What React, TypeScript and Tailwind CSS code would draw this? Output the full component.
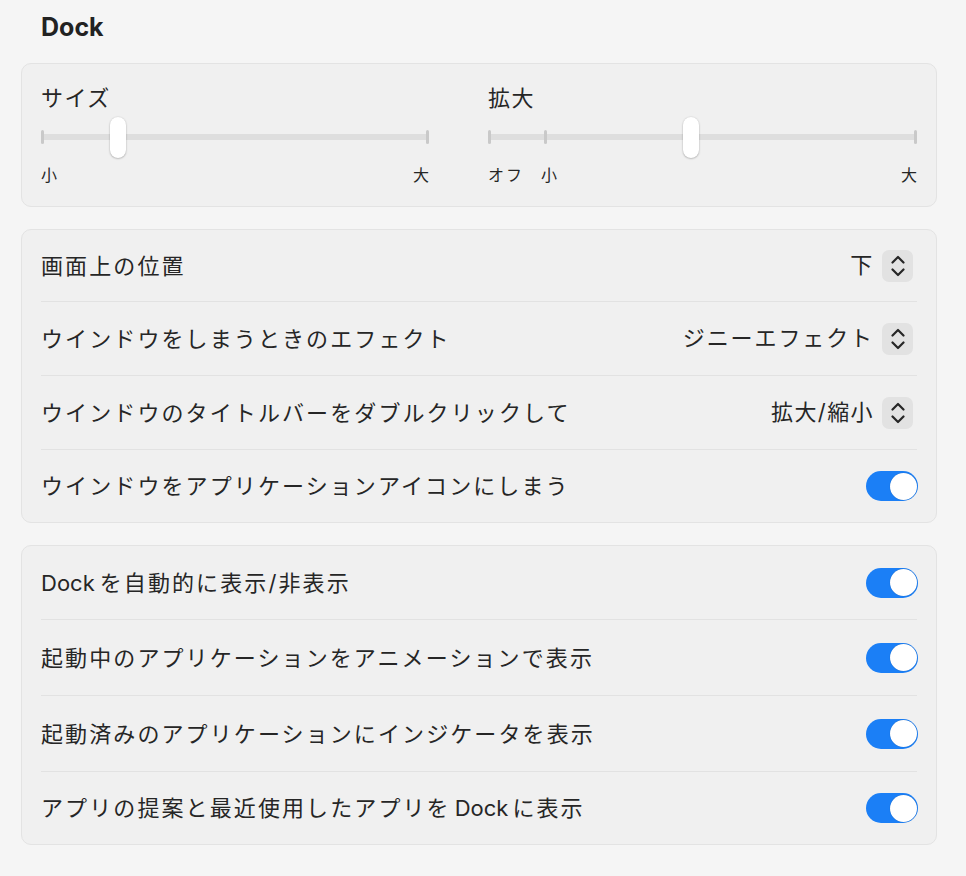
import React from "react";

const font = { fontFamily: '"Inter", "Noto Sans CJK JP", sans-serif' };

function Toggle() {
  return (
    <div className="w-[52px] h-[30px] -mr-[1px] rounded-full bg-[#1b7ff6] flex items-center justify-end pr-[1.5px] shrink-0">
      <div className="w-[27px] h-[27px] rounded-full bg-white shadow-[0_0_1px_rgba(0,0,0,0.3)]" />
    </div>
  );
}

function Stepper() {
  return (
    <div className="w-[31px] h-[32px] mr-[4px] rounded-[7px] bg-[#e2e2e2] flex items-center justify-center shrink-0">
      <svg width="14" height="22" viewBox="0 0 14 22" fill="none" stroke="#262626" strokeWidth="2.2" strokeLinecap="round" strokeLinejoin="round">
        <path d="M1.5 7.5 L7 2 L12.5 7.5" />
        <path d="M1.5 14.5 L7 20 L12.5 14.5" />
      </svg>
    </div>
  );
}

function Dock() {
  return <span className="tracking-normal mx-[4px]">Dock</span>;
}

function DockStart() {
  return <span className="tracking-normal mr-[5px]">Dock</span>;
}

function Divider() {
  return <div className="h-px bg-[#e2e2e2]" />;
}

function Row({ label, right, h }: { label: React.ReactNode; right: React.ReactNode; h: string }) {
  return (
    <div className={`flex items-center justify-between ${h}`}>
      <div className="text-[22px] tracking-[2.1px] text-[#262626] leading-[28px]">{label}</div>
      <div className="flex items-center gap-[8px]">{right}</div>
    </div>
  );
}

function Tick({ pos }: { pos: string }) {
  return <div className={`absolute top-[15px] w-[3px] h-[14px] -ml-[1.5px] rounded-full bg-[#c9c9c9] ${pos}`} />;
}

export default function App() {
  return (
    <div className="min-h-[876px] w-[966px] bg-[#f5f5f5] text-[#262626]" style={font}>
      <div className="pt-[12px] pl-[41px] text-[25px] leading-[30px] font-bold text-[#222]">Dock</div>

      <div className="ml-[21px] w-[916px] mt-[21px] flex flex-col gap-[22px]">
        {/* Sliders card */}
        <div className="rounded-[10px] border border-[#e3e3e3] bg-[#f0f0f0] px-[19px] pt-[20px] pb-[21px] grid grid-cols-[388px_1fr] gap-x-[59px]">
          <div>
            <div className="text-[22px] tracking-[1.5px] leading-[28px]">サイズ</div>
            <div className="relative h-[44px] mt-[3px]">
              <div className="absolute left-0 right-0 top-[19px] h-[6px] rounded-full bg-[#dedede]" />
              <Tick pos="left-[1.5px]" />
              <Tick pos="left-[calc(100%-1.5px)]" />
              <div className="absolute top-[2px] left-[19.8%] -ml-[8px] w-[16px] h-[41px] rounded-full bg-white shadow-[0_0.5px_2px_rgba(0,0,0,0.35)]" />
            </div>
            <div className="mt-[6px] flex justify-between text-[16px] leading-[20px]">
              <span>小</span>
              <span>大</span>
            </div>
          </div>
          <div>
            <div className="text-[22px] tracking-[1.5px] leading-[28px]">拡大</div>
            <div className="relative h-[44px] mt-[3px]">
              <div className="absolute left-0 right-0 top-[19px] h-[6px] rounded-full bg-[#dedede]" />
              <Tick pos="left-[1.5px]" />
              <Tick pos="left-[13.3%]" />
              <Tick pos="left-[calc(100%-1.5px)]" />
              <div className="absolute top-[2px] left-[47.3%] -ml-[8px] w-[16px] h-[41px] rounded-full bg-white shadow-[0_0.5px_2px_rgba(0,0,0,0.35)]" />
            </div>
            <div className="mt-[6px] flex text-[16px] leading-[20px]">
              <span className="tracking-[2px]">オフ</span>
              <span className="ml-[17px]">小</span>
              <span className="ml-auto">大</span>
            </div>
          </div>
        </div>

        {/* Window card */}
        <div className="rounded-[10px] border border-[#e3e3e3] bg-[#f0f0f0] px-[19px]">
          <Row h="h-[71px]" label="画面上の位置" right={<><span className="text-[22px] tracking-[1.7px]">下</span><Stepper /></>} />
          <Divider />
          <Row h="h-[73px]" label="ウインドウをしまうときのエフェクト" right={<><span className="text-[22px] tracking-[1.9px]">ジニーエフェクト</span><Stepper /></>} />
          <Divider />
          <Row h="h-[73px]" label="ウインドウのタイトルバーをダブルクリックして" right={<><span className="text-[22px] tracking-[1.4px]">拡大/縮小</span><Stepper /></>} />
          <Divider />
          <Row h="h-[72px]" label="ウインドウをアプリケーションアイコンにしまう" right={<Toggle />} />
        </div>

        {/* Dock card */}
        <div className="rounded-[10px] border border-[#e3e3e3] bg-[#f0f0f0] px-[19px]">
          <Row h="h-[73px]" label={<><DockStart />を自動的に表示/非表示</>} right={<Toggle />} />
          <Divider />
          <Row h="h-[75px]" label="起動中のアプリケーションをアニメーションで表示" right={<Toggle />} />
          <Divider />
          <Row h="h-[75px]" label="起動済みのアプリケーションにインジケータを表示" right={<Toggle />} />
          <Divider />
          <Row h="h-[72px]" label={<>アプリの提案と最近使用したアプリを<Dock />に表示</>} right={<Toggle />} />
        </div>
      </div>
    </div>
  );
}
